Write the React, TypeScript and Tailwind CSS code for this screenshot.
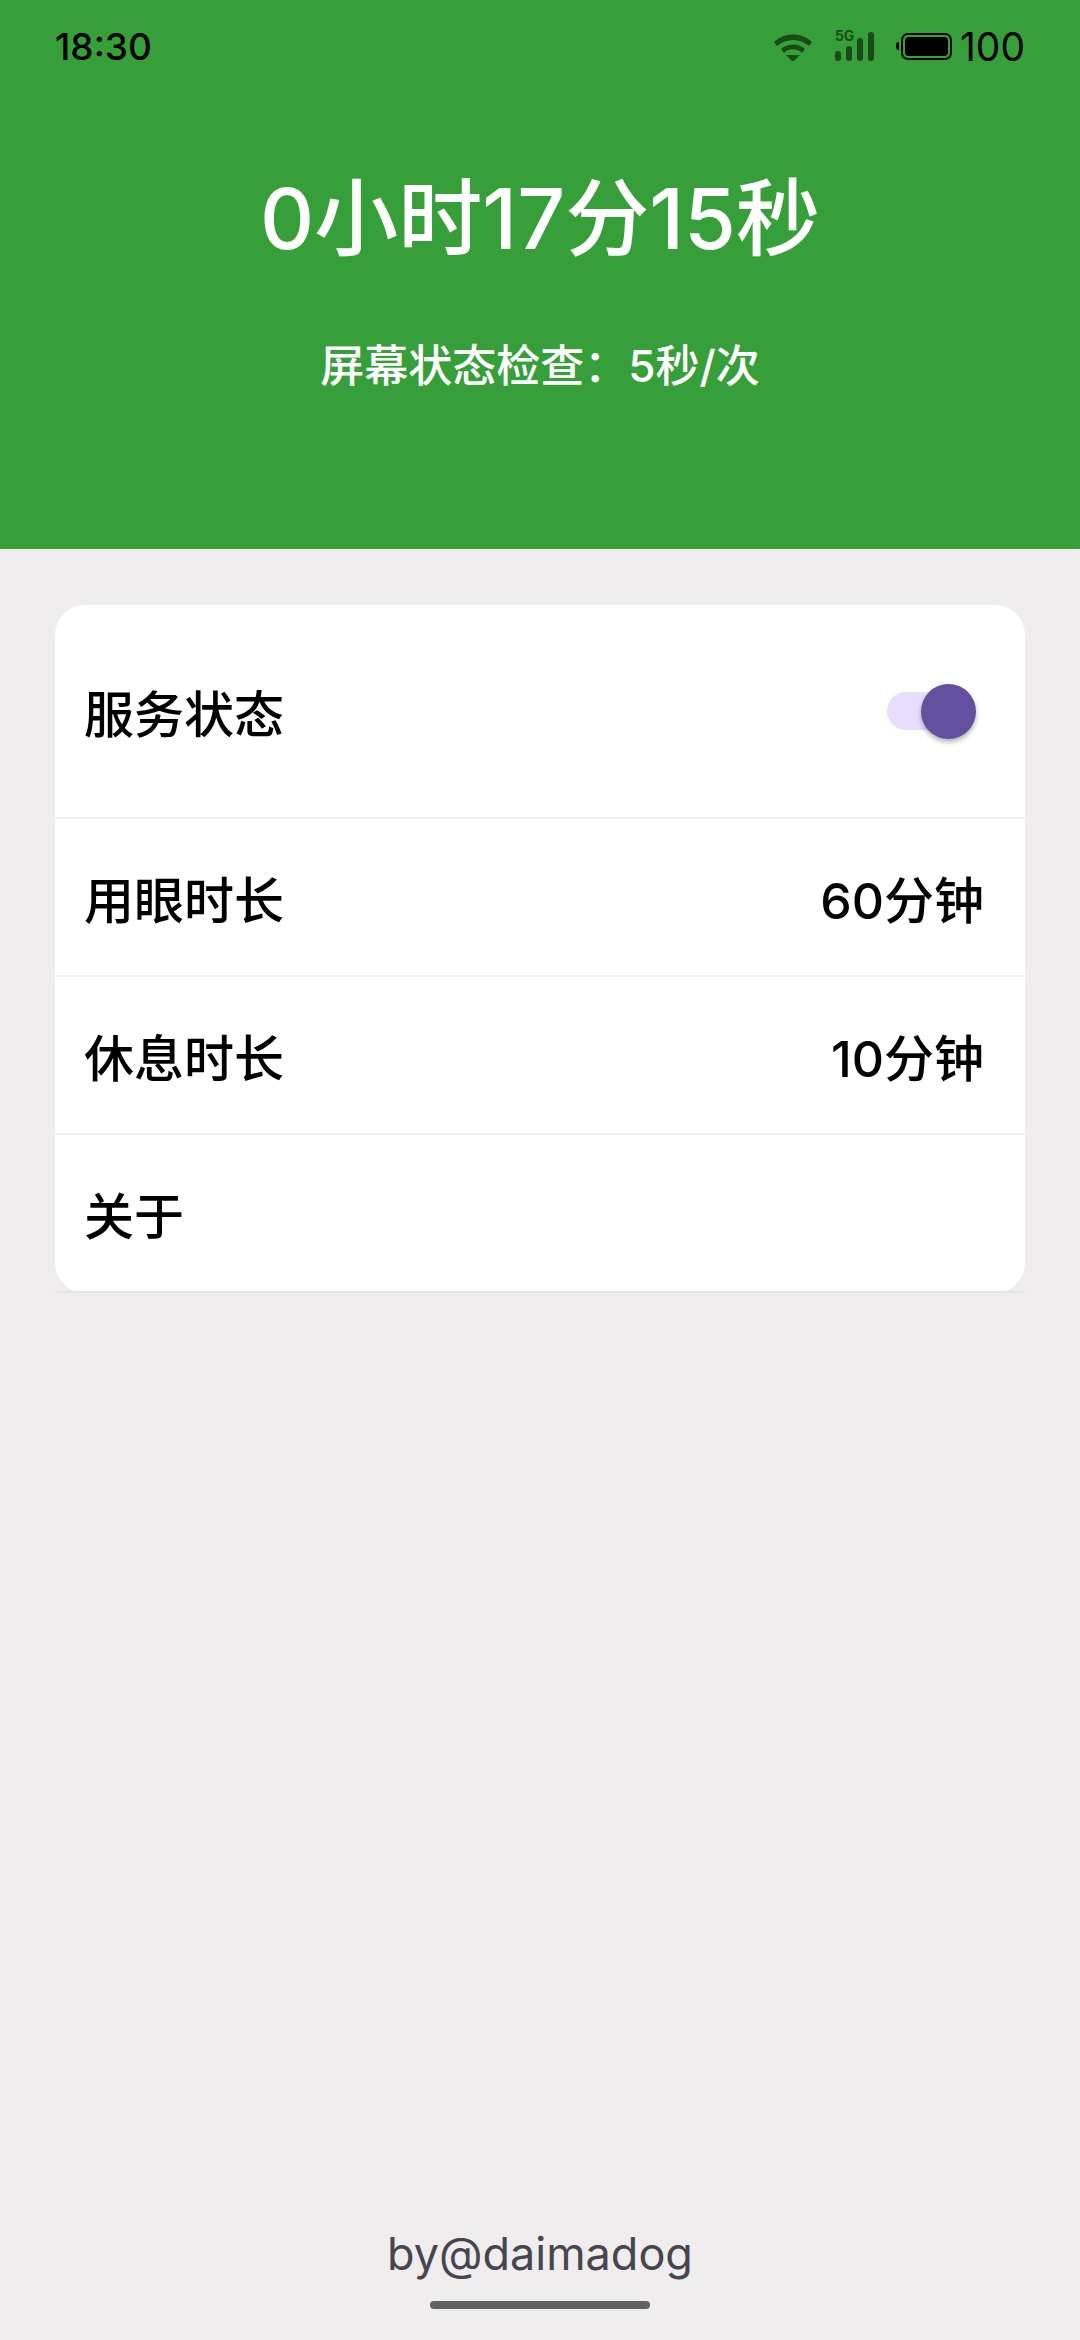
const font = { fontFamily: '"Inter", "Noto Sans CJK SC", sans-serif' }

function StatusIcons() {
  return (
    <div className="flex items-center">
      <svg width="40" height="30" viewBox="0 0 40 30" className="mr-[22px]">
        <path d="M1 11 C11 1 29 1 39 11 L36 15 C27 7 13 7 4 15 Z" fill="#1a4a1a" />
        <path d="M8 18 C14 12 26 12 32 18 L29 22 C24 17 16 17 11 22 Z" fill="#1a4a1a" />
        <path d="M13 24 H27 L20 31 Z" fill="#1a4a1a" />
      </svg>
      <div className="relative w-[40px] h-[30px] mr-[21px]">
        <span className="absolute left-0 top-[-2px] text-[14px] leading-[14px] font-bold text-[#1a4a1a]">5G</span>
        <div className="absolute inset-0 flex items-end gap-[5px]">
          <div className="w-[6px] h-[10px] rounded-full bg-[#1a4a1a]" />
          <div className="w-[6px] h-[15px] rounded-full bg-[#1a4a1a]" />
          <div className="w-[6px] h-[23px] rounded-full bg-[#1a4a1a]" />
          <div className="w-[6px] h-[29px] rounded-full bg-[#1a4a1a]" />
        </div>
      </div>
      <div className="w-[3px] h-[8px] rounded-l-full bg-black mr-[2px]" />
      <div className="w-[51px] h-[27px] rounded-[7px] border-2 border-black p-[2px] mr-[8px]">
        <div className="w-full h-full rounded-[4px] bg-black" />
      </div>
      <span className="text-[39px] leading-none text-black">100</span>
    </div>
  )
}

function Row({ label, value, last }: { label: string; value?: string; last?: boolean }) {
  return (
    <div className={`flex items-center justify-between h-[158px] pl-[29px] pr-[41px] border-b-2 ${last ? "border-[#e4e2e4]" : "border-[#f3f1f3]"}`}>
      <span className="pt-[8px] text-[50px] font-[450] text-black">{label}</span>
      {value && <span className="pt-[8px] text-[50px] font-[450] text-black">{value}</span>}
    </div>
  )
}

export default function App() {
  return (
    <div className="min-h-screen h-[2340px] flex flex-col bg-[#efedee]" style={font}>
      <header className="h-[549px] bg-[#379f3a] flex flex-col shrink-0">
        <div className="flex items-center justify-between h-[46px] mt-[23px] px-[55px]">
          <span className="text-[37px] leading-none font-medium text-black">18:30</span>
          <StatusIcons />
        </div>
        <div className="mt-[98px] text-center text-[84px] leading-[103px] font-[450] text-white">0小时17分15秒</div>
        <div className="mt-[70px] text-center text-[44px] leading-[53px] font-[450] text-white">屏幕状态检查：5秒/次</div>
      </header>

      <main className="px-[55px] pt-[56px]">
        <div className="bg-white rounded-[30px]">
          <div className="flex items-center justify-between h-[214px] pl-[29px] pr-[50px] border-b-2 border-[#f3f1f3]">
            <span className="pt-[8px] text-[50px] font-[450] text-black">服务状态</span>
            <div className="relative w-[88px] h-[38px] rounded-full bg-[#e9ddff]">
              <div className="absolute right-[-1px] top-[-8px] w-[55px] h-[55px] rounded-full bg-[#65509f] shadow-[0_3px_5px_rgba(0,0,0,0.3)]" />
            </div>
          </div>
          <Row label="用眼时长" value="60分钟" />
          <Row label="休息时长" value="10分钟" />
          <Row label="关于" last />
        </div>
      </main>

      <footer className="mt-auto flex flex-col items-center pb-[31px]">
        <span className="text-[45px] leading-[54px] text-[#49454f]">by@daimadog</span>
        <div className="mt-[20px] w-[220px] h-[8px] rounded-full bg-[#616161]" />
      </footer>
    </div>
  )
}
